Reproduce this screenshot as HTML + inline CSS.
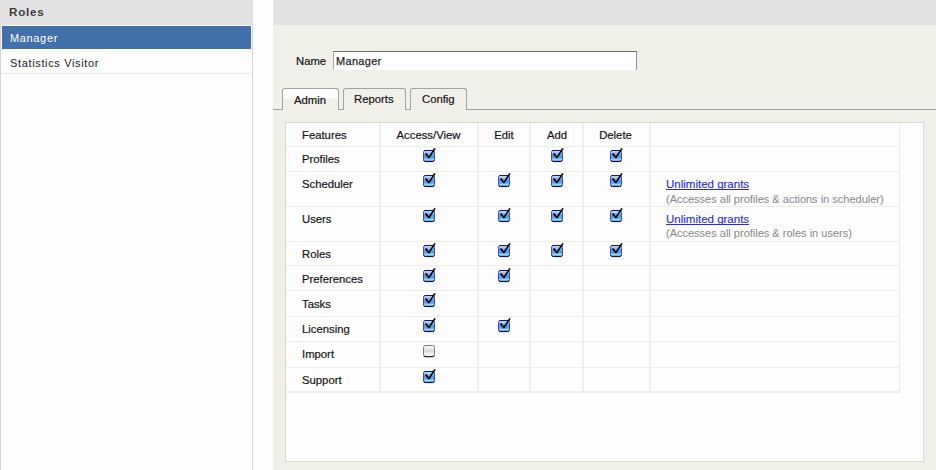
<!DOCTYPE html>
<html><head><meta charset="utf-8">
<style>
*{box-sizing:border-box;margin:0;padding:0}
html,body{width:936px;height:470px;overflow:hidden;background:#fdfdfd}
body{position:relative;font-family:"Liberation Sans",sans-serif;font-size:11.3px;color:#161616}
.a{position:absolute;white-space:nowrap}
.t{position:absolute;white-space:nowrap;line-height:14px;-webkit-text-stroke:0.2px currentColor}
.dv{letter-spacing:0.65px;font-size:11px;-webkit-text-stroke:0}
/* left panel */
#lp{position:absolute;left:0;top:0;width:253px;height:470px;background:#fdfdfd;border-left:1px solid #d6d6d6;border-right:1px solid #d6d6d6}
#lph{position:absolute;left:0;top:0;width:253px;height:25px;background:#e2e2e2}
#sel{position:absolute;left:2px;top:26px;width:249px;height:23px;background:#4170aa}
#sep1{position:absolute;left:1px;top:73px;width:251px;height:1px;background:#ebebe5}
#lpline{position:absolute;left:1px;top:25px;width:251px;height:1px;background:#f8f6e6}
/* right panel */
#rp{position:absolute;left:273px;top:0;width:663px;height:470px;background:#f0efe8}
#rph{position:absolute;left:273px;top:0;width:663px;height:25px;background:#e2e2e2}
#inp{position:absolute;left:333px;top:51px;width:304px;height:19px;background:#fff;border-top:1px solid #6f6f6f;border-left:1px solid #a9a9a9;border-right:1px solid #8f8f8f}
#tabline{position:absolute;left:273px;top:109px;width:663px;height:1px;background:#a0a09e}
.tab{position:absolute;top:88px;height:22px;border:1px solid #a3a3a1;border-bottom:none;border-radius:3px 3px 0 0;background:#f0efe8}
#t1{left:282px;width:57px;background:linear-gradient(#fefefe 0,#fdfdfc 9px,#f0efe8 10px);height:22px}
#t2{left:343px;width:63px}
#t3{left:410px;width:57px}
#box{position:absolute;left:285px;top:122px;width:639px;height:340px;background:#fdfdfd;border:1px solid #dadad6}
.hl{position:absolute;left:286px;width:614px;height:1px;background:#eeede6}
.vl{position:absolute;top:123px;width:2px;height:269px;background:#f0efe8}
.cb{position:absolute;width:15px;height:16px;overflow:visible}
.lnk{color:#2828f2;-webkit-text-stroke:0.1px #2828f2;text-decoration:underline;text-decoration-skip-ink:none;font-size:11.5px}
.desc{color:#8c8c8c;font-size:11px;-webkit-text-stroke:0.05px #8c8c8c}
.c{text-align:center}
</style></head><body>
<svg width="0" height="0" style="position:absolute">
<defs>
<linearGradient id="gb" x1="0" y1="0" x2="0" y2="1">
<stop offset="0" stop-color="#c8e0f8"/><stop offset="0.25" stop-color="#98c2f2"/><stop offset="0.45" stop-color="#5d9cea"/><stop offset="0.7" stop-color="#58a0ec"/><stop offset="0.86" stop-color="#90dcfa"/><stop offset="1" stop-color="#c8f8ff"/></linearGradient>
<linearGradient id="gg" x1="0" y1="0" x2="0" y2="1">
<stop offset="0" stop-color="#ffffff"/><stop offset="0.5" stop-color="#d9d9d9"/><stop offset="0.8" stop-color="#f4f4f4"/><stop offset="1" stop-color="#ffffff"/></linearGradient>
<g id="ck"><rect x="1.5" y="3.5" width="11" height="10.6" rx="1.8" fill="url(#gb)" stroke="#2a3aa8" stroke-width="0.9"/><path d="M2.6 3.5 H11.4" stroke="#16167a" stroke-width="1"/>
<path d="M1.6 13.4 Q2 14.6 3.4 14.6 H10.6 Q12 14.6 12.4 13.4" fill="none" stroke="#05051a" stroke-width="1"/>
<path d="M2.8 6.9 L4.5 5.9 L6.8 9.3 L12.3 0.9 L13.7 1.7 L7.5 11.3 L6.3 11.3 Z" fill="#050505"/></g>
<g id="uk"><rect x="1.5" y="3.5" width="11" height="11" rx="2" fill="url(#gg)" stroke="#7a7a7a" stroke-width="1"/>
<path d="M1.8 13.8 Q2.3 14.6 3.5 14.6 L10.5 14.6 Q11.7 14.6 12.2 13.8" fill="none" stroke="#2a2a2a" stroke-width="1.2"/></g>
</defs></svg>
<div id="lp"></div>
<div id="lph"></div>
<div id="lpline"></div>
<div id="sel"></div>
<div id="sep1"></div>
<div class="t dv" style="left:9px;top:5px;font-weight:bold;color:#3c3c3c;letter-spacing:0.8px;font-size:11.6px">Roles</div>
<div class="t dv" style="left:10px;top:31px;color:#fff">Manager</div>
<div class="t dv" style="left:10px;top:56px;color:#222">Statistics Visitor</div>

<div id="rp"></div>
<div id="rph"></div>
<div class="t" style="left:296px;top:54px">Name</div>
<div id="inp"></div>
<div class="t" style="left:336px;top:54px;color:#262626;font-size:11px;letter-spacing:0.3px;-webkit-text-stroke:0.25px #262626">Manager</div>

<div id="tabline"></div>
<div class="tab" id="t1"></div>
<div class="tab" id="t2"></div>
<div class="tab" id="t3"></div>
<div class="t" style="left:294px;top:93px">Admin</div>
<div class="t" style="left:354px;top:92px">Reports</div>
<div class="t" style="left:422px;top:92px">Config</div>

<div id="box"></div>
<!-- horizontal lines -->
<div class="hl" style="top:146px"></div>
<div class="hl" style="top:171px"></div>
<div class="hl" style="top:206px"></div>
<div class="hl" style="top:241px"></div>
<div class="hl" style="top:265px"></div>
<div class="hl" style="top:290px"></div>
<div class="hl" style="top:316px"></div>
<div class="hl" style="top:341px"></div>
<div class="hl" style="top:367px"></div>
<div class="hl" style="top:391px;height:2px"></div>
<!-- vertical lines -->
<div class="vl" style="left:379px"></div>
<div class="vl" style="left:477px"></div>
<div class="vl" style="left:529px"></div>
<div class="vl" style="left:582px"></div>
<div class="vl" style="left:649px"></div>
<div class="vl" style="left:899px;width:1px;background:#ebeae3"></div>

<!--TABLE-->
<div class="t" style="left:302px;top:128px">Features</div>
<div class="t c" style="left:380px;width:97px;top:128px">Access/View</div>
<div class="t c" style="left:478px;width:52px;top:128px">Edit</div>
<div class="t c" style="left:531px;width:52px;top:128px">Add</div>
<div class="t c" style="left:583px;width:65px;top:128px">Delete</div>
<div class="t" style="left:302px;top:152px">Profiles</div>
<svg class="cb" style="left:422px;top:147px" width="15" height="16"><use href="#ck"/></svg>
<svg class="cb" style="left:550px;top:147px" width="15" height="16"><use href="#ck"/></svg>
<svg class="cb" style="left:609px;top:147px" width="15" height="16"><use href="#ck"/></svg>
<div class="t" style="left:302px;top:177px">Scheduler</div>
<svg class="cb" style="left:422px;top:172px" width="15" height="16"><use href="#ck"/></svg>
<svg class="cb" style="left:497px;top:172px" width="15" height="16"><use href="#ck"/></svg>
<svg class="cb" style="left:550px;top:172px" width="15" height="16"><use href="#ck"/></svg>
<svg class="cb" style="left:609px;top:172px" width="15" height="16"><use href="#ck"/></svg>
<div class="t" style="left:302px;top:212px">Users</div>
<svg class="cb" style="left:422px;top:207px" width="15" height="16"><use href="#ck"/></svg>
<svg class="cb" style="left:497px;top:207px" width="15" height="16"><use href="#ck"/></svg>
<svg class="cb" style="left:550px;top:207px" width="15" height="16"><use href="#ck"/></svg>
<svg class="cb" style="left:609px;top:207px" width="15" height="16"><use href="#ck"/></svg>
<div class="t" style="left:302px;top:247px">Roles</div>
<svg class="cb" style="left:422px;top:242px" width="15" height="16"><use href="#ck"/></svg>
<svg class="cb" style="left:497px;top:242px" width="15" height="16"><use href="#ck"/></svg>
<svg class="cb" style="left:550px;top:242px" width="15" height="16"><use href="#ck"/></svg>
<svg class="cb" style="left:609px;top:242px" width="15" height="16"><use href="#ck"/></svg>
<div class="t" style="left:302px;top:272px">Preferences</div>
<svg class="cb" style="left:422px;top:267px" width="15" height="16"><use href="#ck"/></svg>
<svg class="cb" style="left:497px;top:267px" width="15" height="16"><use href="#ck"/></svg>
<div class="t" style="left:302px;top:297px">Tasks</div>
<svg class="cb" style="left:422px;top:292px" width="15" height="16"><use href="#ck"/></svg>
<div class="t" style="left:302px;top:322px">Licensing</div>
<svg class="cb" style="left:422px;top:317px" width="15" height="16"><use href="#ck"/></svg>
<svg class="cb" style="left:497px;top:317px" width="15" height="16"><use href="#ck"/></svg>
<div class="t" style="left:302px;top:347px">Import</div>
<svg class="cb" style="left:422px;top:342px" width="15" height="16"><use href="#uk"/></svg>
<div class="t" style="left:302px;top:373px">Support</div>
<svg class="cb" style="left:422px;top:368px" width="15" height="16"><use href="#ck"/></svg>
<div class="t lnk" style="left:666px;top:177px">Unlimited grants</div>
<div class="t desc" style="left:666px;top:192px">(Accesses all profiles &amp; actions in scheduler)</div>
<div class="t lnk" style="left:666px;top:212px">Unlimited grants</div>
<div class="t desc" style="left:666px;top:226px">(Accesses all profiles &amp; roles in users)</div>
<!--/TABLE-->
</body></html>
